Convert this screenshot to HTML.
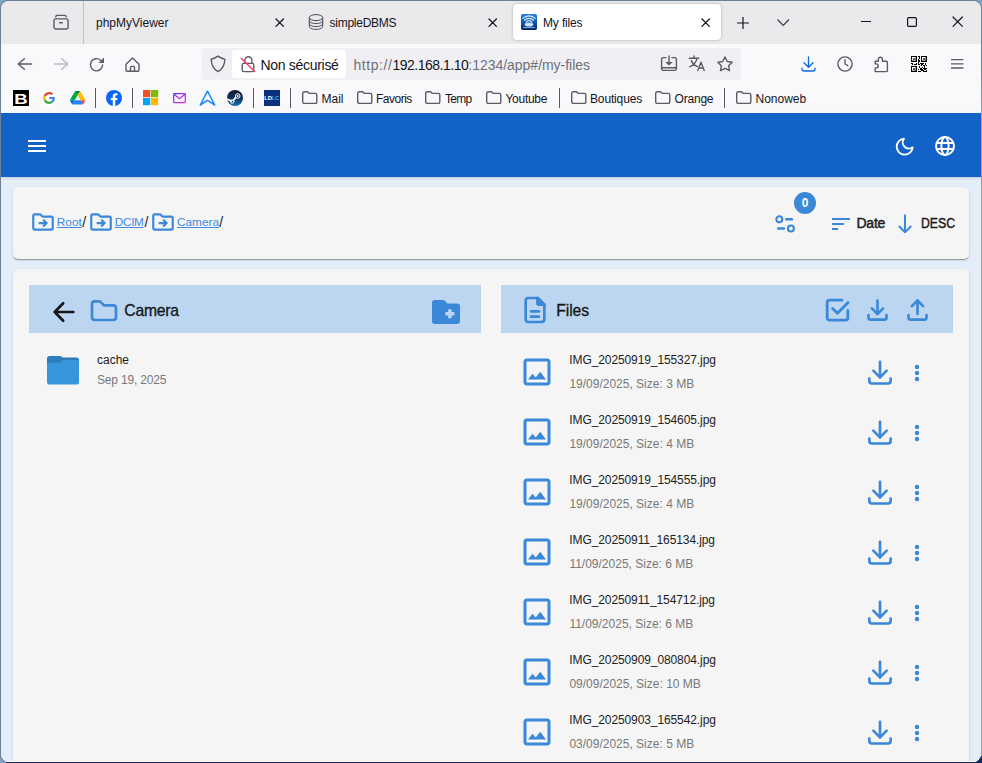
<!DOCTYPE html>
<html lang="fr">
<head>
<meta charset="utf-8">
<title>My files</title>
<style>
*{box-sizing:border-box;margin:0;padding:0}
html,body{width:982px;height:763px;overflow:hidden}
body{background:#80a5c5;font-family:"Liberation Sans",sans-serif;position:relative;color:#15141a}
.abs{position:absolute}
#win{position:absolute;left:1px;top:1px;width:979.6px;height:761px;border-radius:8px 8px 8px 8px;overflow:hidden;background:#f9f9fb}
#edgeR{position:absolute;left:976px;top:8px;width:6px;height:752px;background:linear-gradient(#6a8197 0,#6a8197 60px,#a0a0a0 110px,#a0a0a0 100%)}
#edgeB{position:absolute;left:6px;top:756px;width:976px;height:7px;background:#17275c}
/* ---------- browser chrome ---------- */
#tabbar{position:absolute;left:0;top:0;width:980px;height:43px;background:#eaeaed}
#tabbar .sep{position:absolute;left:82.2px;top:0;width:1px;height:43px;background:#c0c0c6}
.tabtxt{position:absolute;font-size:12px;line-height:16px;top:14px;white-space:nowrap;color:#15141a}
#acttab{position:absolute;left:512px;top:3px;width:208px;height:36px;background:#fff;border-radius:4px;box-shadow:0 0 3px rgba(0,0,0,.28)}
#navbar{position:absolute;left:0;top:43px;width:980px;height:69px;background:#f9f9fb}
#urlbar{position:absolute;left:201px;top:47px;width:539px;height:32px;background:#f0f0f4;border-radius:4px}
#nonsec{position:absolute;left:231px;top:49px;width:114px;height:28px;background:#fff;border-radius:4px}
.urltxt{position:absolute;top:56.3px;font-size:14px;line-height:16px;white-space:nowrap}
.bm{position:absolute;top:90px;font-size:12px;line-height:16px;white-space:nowrap;color:#15141a}
.bsep{position:absolute;top:87px;width:1px;height:20px;background:#5b5b66}
svg{position:absolute;overflow:visible}
/* ---------- app ---------- */
#page{position:absolute;left:0;top:112px;width:980px;height:649px;background:#e3eefa}
#appbar{position:absolute;width:980px;height:64px;background:#1262c8;box-shadow:0 1px 3px 0 rgba(0,0,0,.16)}
.card{position:absolute;background:#f5f5f5;border-radius:5px;box-shadow:0 2px 1px -1px rgba(0,0,0,.2),0 1px 1px 0 rgba(0,0,0,.14),0 1px 3px 0 rgba(0,0,0,.12)}
.hdr{position:absolute;top:16px;height:48px;width:452px;background:#bcd6f2}
.t{position:absolute;white-space:nowrap}
.nm{font-size:12px;line-height:16px;color:#1c1c1c;letter-spacing:-.1px}
.sb{font-size:12px;line-height:16px;color:#787878}
.ttl{font-size:15.7px;line-height:20px;color:#161616;-webkit-text-stroke:.32px #161616}
.lnk{font-size:11.8px;line-height:16px;color:#4189e6;text-decoration:underline;text-underline-offset:.6px}
.sl{font-size:14px;line-height:16px;color:#222}
.btn{font-size:14px;line-height:16px;color:#1b1b1b;-webkit-text-stroke:.45px #1b1b1b}
</style>
</head>
<body>
<div style="position:absolute;left:1px;top:1px;width:979.6px;height:761px;border-radius:8px;box-shadow:0 0 0 1.3px #6a8197"></div>
<div id="edgeR"></div>
<div id="edgeB"></div>
<div id="win">
  <!-- ================= TAB BAR ================= -->
  <div id="tabbar">
    <div class="sep"></div>
    <div id="acttab"></div>
    <div class="tabtxt" style="left:95px">phpMyViewer</div>
    <div class="tabtxt" style="left:328.5px;letter-spacing:-.25px">simpleDBMS</div>
    <div class="tabtxt" style="left:542px;letter-spacing:-.15px">My files</div>
  </div>
  <!-- ================= NAV BAR ================= -->
  <div id="navbar"></div>
  <div id="urlbar"></div>
  <div id="nonsec"></div>
  <div class="urltxt" style="left:259.5px;color:#15141a;letter-spacing:-.3px">Non sécurisé</div>
  <div class="urltxt" style="left:352.5px;color:#6f6f78"><span style="letter-spacing:.55px">http://</span><span style="color:#15141a;letter-spacing:-.48px">192.168.1.10</span><span style="letter-spacing:-.03px">:1234/app#/my-files</span></div>
  <!-- ================= BOOKMARKS ================= -->
  <div class="bm" style="left:320.5px">Mail</div>
  <div class="bm" style="left:375px;letter-spacing:-.5px">Favoris</div>
  <div class="bm" style="left:444px;letter-spacing:-.75px">Temp</div>
  <div class="bm" style="left:504.5px;letter-spacing:-.29px">Youtube</div>
  <div class="bm" style="left:589px;letter-spacing:-.15px">Boutiques</div>
  <div class="bm" style="left:673.5px;letter-spacing:-.2px">Orange</div>
  <div class="bm" style="left:754.5px">Nonoweb</div>
  <div class="bsep" style="left:94px"></div>
  <div class="bsep" style="left:131px"></div>
  <div class="bsep" style="left:252px"></div>
  <div class="bsep" style="left:289px"></div>
  <div class="bsep" style="left:558px"></div>
  <div class="bsep" style="left:723px"></div>
  <div style="position:absolute;left:-1px;top:-1px;width:982px;height:763px">
<svg style="left:53px;top:14px" width="16" height="16" viewBox="0 0 16 16" fill="none" stroke="#5b5b66" stroke-width="1.4" stroke-linecap="round" stroke-linejoin="round"><path d="M2.800 2.900v-.2a1.300 1.300 0 0 1 1.300-1.300h7.800a1.300 1.300 0 0 1 1.300 1.300v.2"/><rect x="0.950" y="4.850" width="14.150" height="10.150" rx="2"/><path d="M6.700 8.800h2.600"/></svg>
<svg style="left:275.90000000000003px;top:18.5px" width="7.4" height="7.4" viewBox="0 0 7.4 7.4" ><path d="M0 0L7.4 7.4M7.4 0L0 7.4" stroke="#15141a" stroke-width="1.3" stroke-linecap="round"/></svg>
<svg style="left:489.1px;top:18.5px" width="7.4" height="7.4" viewBox="0 0 7.4 7.4" ><path d="M0 0L7.4 7.4M7.4 0L0 7.4" stroke="#15141a" stroke-width="1.3" stroke-linecap="round"/></svg>
<svg style="left:701.5px;top:18.5px" width="7.4" height="7.4" viewBox="0 0 7.4 7.4" ><path d="M0 0L7.4 7.4M7.4 0L0 7.4" stroke="#15141a" stroke-width="1.3" stroke-linecap="round"/></svg>
<svg style="left:308px;top:14px" width="16" height="16" viewBox="0 0 16 16" fill="none" stroke="#45454d" stroke-width="1"><ellipse cx="8" cy="3.600" rx="6.700" ry="3"/><path d="M1.300 3.600v8.800c0 1.650 3 3 6.700 3s6.700-1.350 6.700-3V3.600"/><path d="M1.300 6.600c0 1.650 3 3 6.700 3s6.700-1.350 6.700-3M1.300 9.600c0 1.650 3 3 6.700 3s6.700-1.350 6.700-3"/></svg>
<svg style="left:521px;top:14px" width="16" height="16" viewBox="0 0 16 16" ><defs><linearGradient id="fg" x1="0" y1="0" x2="0" y2="1"><stop offset="0" stop-color="#2a7fdd"/><stop offset=".55" stop-color="#0d56b4"/><stop offset="1" stop-color="#04235f"/></linearGradient></defs><rect width="16" height="16" rx="1.800" fill="url(#fg)"/><g fill="none" stroke="#e8f3ff" stroke-width="1.150" stroke-linecap="round"><path d="M1.800 4.300a9 9 0 0 1 12.400 0"/><path d="M3.500 6.200a6.500 6.500 0 0 1 9 0"/><path d="M5.200 8a4 4 0 0 1 5.600 0"/></g><ellipse cx="8" cy="10.400" rx="4.300" ry="2" fill="#cfe4fb"/><rect x="2" y="13" width="12" height="1" fill="#9fc3ee" opacity=".8"/></svg>
<svg style="left:736.5px;top:16.5px" width="12" height="12" viewBox="0 0 12 12" ><path d="M6 0v12M0 6h12" stroke="#15141a" stroke-width="1.200"/></svg>
<svg style="left:777px;top:18.5px" width="12.5" height="7" viewBox="0 0 12.5 7" ><path d="M0.500 0.500l5.750 5.800 5.750-5.800" fill="none" stroke="#3a3a42" stroke-width="1.200"/></svg>
<svg style="left:861px;top:21px" width="10" height="1" viewBox="0 0 10 1" ><rect width="10" height="1" fill="#15141a"/></svg>
<svg style="left:907px;top:17px" width="10" height="10" viewBox="0 0 10 10" ><rect x=".6" y=".6" width="8.800" height="8.800" rx="1.200" fill="none" stroke="#15141a" stroke-width="1.200"/></svg>
<svg style="left:953.4px;top:17.3px" width="9.4" height="9.4" viewBox="0 0 9.4 9.4" ><path d="M0 0L9.4 9.4M9.4 0L0 9.4" stroke="#15141a" stroke-width="1.2" stroke-linecap="round"/></svg>
<svg style="left:17px;top:57px" width="16" height="14" viewBox="0 0 16 14" fill="none" stroke="#5b5b66" stroke-width="1.4" stroke-linecap="round" stroke-linejoin="round"><path d="M14.500 7H1.200M7.400 1.700L1.200 7l6.200 5.300"/></svg>
<svg style="left:53px;top:57px" width="16" height="14" viewBox="0 0 16 14" fill="none" stroke="#b9b9c0" stroke-width="1.400" stroke-linecap="round" stroke-linejoin="round"><path d="M1.500 7h13.300M8.600 1.700L14.800 7l-6.200 5.300"/></svg>
<svg style="left:89px;top:57px" width="16" height="15" viewBox="0 0 16 15" ><path d="M13.600 8a6.100 6.100 0 1 1-1.900-4.700" fill="none" stroke="#5b5b66" stroke-width="1.400" stroke-linecap="round"/><path d="M15 0.600v5.400H9.600z" fill="#5b5b66"/></svg>
<svg style="left:125px;top:57px" width="15" height="15" viewBox="0 0 15 15" fill="none" stroke="#5b5b66" stroke-width="1.4" stroke-linecap="round" stroke-linejoin="round"><path d="M1 7.200L7.500 0.900 14 7.200V13a1.200 1.200 0 0 1-1.200 1.200H2.200A1.200 1.200 0 0 1 1 13z"/><path d="M5.500 14v-3.600a1 1 0 0 1 1-1h2a1 1 0 0 1 1 1V14"/></svg>
<svg style="left:210px;top:55px" width="16" height="18" viewBox="0 0 16 18" fill="none" stroke="#5b5b66" stroke-width="1.4" stroke-linecap="round" stroke-linejoin="round"><path d="M8 1.200C5.800 2.700 3.600 3.700 1.200 4.300c0 5.400 2.400 9.800 6.800 12.300 4.400-2.500 6.800-6.900 6.800-12.300C12.400 3.700 10.200 2.700 8 1.200z"/></svg>
<svg style="left:240px;top:55px" width="16" height="18" viewBox="0 0 16 18" fill="none" stroke="#5b5b66" stroke-width="1.4" stroke-linecap="round" stroke-linejoin="round"><rect x="2.200" y="8.400" width="11.600" height="8.200" rx="1.600"/><path d="M4.900 8.200V5.300a3.500 3.500 0 0 1 7 0v2.900"/></svg>
<svg style="left:240px;top:55px" width="16" height="18" viewBox="0 0 16 18" ><path d="M1.200 3.200l13.400 13.200" stroke="#ff3b6b" stroke-width="1.400" stroke-linecap="round"/></svg>
<svg style="left:660px;top:55px" width="18" height="17" viewBox="0 0 18 17" ><path d="M6 2.600H3.200A1.600 1.600 0 0 0 1.600 4.200v9.600a1.600 1.600 0 0 0 1.600 1.600h11.600a1.600 1.600 0 0 0 1.600-1.600V4.200a1.600 1.600 0 0 0-1.600-1.600H12M1.600 12.700h14.800M9 1v7.500" fill="none" stroke="#5b5b66" stroke-width="1.400" stroke-linecap="round"/><path d="M5.200 7h7.600L9 10.600z" fill="#5b5b66"/></svg>
<svg style="left:688px;top:55px" width="18" height="17" viewBox="0 0 18 17" fill="none" stroke="#5b5b66" stroke-width="1.4" stroke-linecap="round" stroke-linejoin="round"><path d="M1.300 3.300h9.400M6 1v2.300M9 3.300C8.300 7 5.600 10 1.600 11.800M3.300 5.600c1 2.600 3.200 4.800 6 6"/><path d="M9.800 15.600l3.200-8.400 3.200 8.400M10.900 13h4.200"/></svg>
<svg style="left:717px;top:56px" width="16" height="16" viewBox="0 0 16 16" fill="none" stroke="#5b5b66" stroke-width="1.4" stroke-linecap="round" stroke-linejoin="round"><path d="M8 .9l2.200 4.600 5 .7-3.600 3.500.9 5L8 12.300l-4.500 2.400.9-5L.8 6.200l5-.7z"/></svg>
<svg style="left:801px;top:55.5px" width="15" height="16" viewBox="0 0 15 16" ><path d="M7.500 .8v10M3 6.700l4.500 4.500L12 6.700M1 12.200v1.400A1.400 1.400 0 0 0 2.400 15h10.200a1.400 1.400 0 0 0 1.400-1.400v-1.400" fill="none" stroke="#0a6ae6" stroke-width="1.350" stroke-linecap="round" stroke-linejoin="round"/></svg>
<svg style="left:836.7px;top:56px" width="16" height="16" viewBox="0 0 16 16" fill="none" stroke="#5b5b66" stroke-width="1.4" stroke-linecap="round" stroke-linejoin="round"><circle cx="8" cy="8" r="7.100"/><path d="M8 3.800V8l2.800 1.700"/></svg>
<svg style="left:874px;top:56px" width="15" height="16" viewBox="0 0 15 16" fill="none" stroke="#5b5b66" stroke-width="1.4" stroke-linecap="round" stroke-linejoin="round"><path d="M1.200 5.200h3.200V3.300a2 2 0 0 1 4 0v1.900h3.800a1.200 1.200 0 0 1 1.200 1.200v8a1.200 1.200 0 0 1-1.200 1.200H1.200v-3.700h1a2 2 0 0 0 0-4h-1z"/></svg>
<svg style="left:911px;top:56px" width="16" height="16" viewBox="0 0 16 16" ><rect x="0" y="0" width="6" height="6" fill="#000"/><rect x="1" y="1" width="3.600" height="3.600" fill="#fff"/><rect x="2.2" y="2.2" width="1.600" height="1.600" fill="#000"/><rect x="10" y="0" width="6" height="6" fill="#000"/><rect x="11" y="1" width="3.600" height="3.600" fill="#fff"/><rect x="12.2" y="2.2" width="1.600" height="1.600" fill="#000"/><rect x="0" y="10" width="6" height="6" fill="#000"/><rect x="1" y="11" width="3.600" height="3.600" fill="#fff"/><rect x="2.2" y="12.2" width="1.600" height="1.600" fill="#000"/><rect x="7" y="0" width="1" height="1" fill="#000"/><rect x="8" y="0" width="1" height="1" fill="#000"/><rect x="8" y="1" width="1" height="1" fill="#000"/><rect x="8" y="2" width="1" height="1" fill="#000"/><rect x="7" y="3" width="1" height="1" fill="#000"/><rect x="7" y="4" width="1" height="1" fill="#000"/><rect x="8" y="4" width="1" height="1" fill="#000"/><rect x="7" y="5" width="1" height="1" fill="#000"/><rect x="8" y="5" width="1" height="1" fill="#000"/><rect x="7" y="6" width="1" height="1" fill="#000"/><rect x="0" y="7" width="1" height="1" fill="#000"/><rect x="1" y="7" width="1" height="1" fill="#000"/><rect x="5" y="7" width="1" height="1" fill="#000"/><rect x="7" y="7" width="1" height="1" fill="#000"/><rect x="9" y="7" width="1" height="1" fill="#000"/><rect x="10" y="7" width="1" height="1" fill="#000"/><rect x="11" y="7" width="1" height="1" fill="#000"/><rect x="12" y="7" width="1" height="1" fill="#000"/><rect x="14" y="7" width="1" height="1" fill="#000"/><rect x="1" y="8" width="1" height="1" fill="#000"/><rect x="3" y="8" width="1" height="1" fill="#000"/><rect x="4" y="8" width="1" height="1" fill="#000"/><rect x="5" y="8" width="1" height="1" fill="#000"/><rect x="7" y="8" width="1" height="1" fill="#000"/><rect x="8" y="8" width="1" height="1" fill="#000"/><rect x="10" y="8" width="1" height="1" fill="#000"/><rect x="11" y="8" width="1" height="1" fill="#000"/><rect x="14" y="8" width="1" height="1" fill="#000"/><rect x="10" y="9" width="1" height="1" fill="#000"/><rect x="12" y="9" width="1" height="1" fill="#000"/><rect x="13" y="9" width="1" height="1" fill="#000"/><rect x="15" y="9" width="1" height="1" fill="#000"/><rect x="8" y="10" width="1" height="1" fill="#000"/><rect x="13" y="10" width="1" height="1" fill="#000"/><rect x="8" y="11" width="1" height="1" fill="#000"/><rect x="11" y="11" width="1" height="1" fill="#000"/><rect x="13" y="11" width="1" height="1" fill="#000"/><rect x="9" y="12" width="1" height="1" fill="#000"/><rect x="10" y="12" width="1" height="1" fill="#000"/><rect x="12" y="12" width="1" height="1" fill="#000"/><rect x="13" y="12" width="1" height="1" fill="#000"/><rect x="14" y="12" width="1" height="1" fill="#000"/><rect x="15" y="12" width="1" height="1" fill="#000"/><rect x="7" y="13" width="1" height="1" fill="#000"/><rect x="9" y="13" width="1" height="1" fill="#000"/><rect x="10" y="13" width="1" height="1" fill="#000"/><rect x="11" y="13" width="1" height="1" fill="#000"/><rect x="13" y="13" width="1" height="1" fill="#000"/><rect x="14" y="13" width="1" height="1" fill="#000"/><rect x="10" y="14" width="1" height="1" fill="#000"/><rect x="11" y="14" width="1" height="1" fill="#000"/><rect x="12" y="14" width="1" height="1" fill="#000"/><rect x="15" y="14" width="1" height="1" fill="#000"/><rect x="7" y="15" width="1" height="1" fill="#000"/><rect x="8" y="15" width="1" height="1" fill="#000"/><rect x="9" y="15" width="1" height="1" fill="#000"/><rect x="12" y="15" width="1" height="1" fill="#000"/><rect x="13" y="15" width="1" height="1" fill="#000"/><rect x="14" y="15" width="1" height="1" fill="#000"/><rect x="15" y="15" width="1" height="1" fill="#000"/></svg>
<svg style="left:951px;top:59px" width="12.5" height="10" viewBox="0 0 12.5 10" ><path d="M0 .6h12.500M0 4.800h12.500M0 9h12.500" stroke="#5b5b66" stroke-width="1.350"/></svg>
<svg style="left:13px;top:90px" width="16" height="16" viewBox="0 0 16 16" ><rect width="16" height="16" fill="#000"/><text x="6.650" y="13.700" transform="scale(1.2,1)" text-anchor="middle" font-family="Liberation Sans,sans-serif" font-weight="bold" font-size="15.500" fill="#fff">B</text></svg>
<svg style="left:41px;top:90px" width="16" height="16" viewBox="0 0 16 16" ><circle cx="8" cy="8" r="8" fill="#fff"/><path d="M13.900 8.150c0-.45-.04-.78-.12-1.130H8.120v2.080h3.320c-.07.520-.43 1.300-1.230 1.820l1.900 1.460c1.130-1.050 1.790-2.580 1.790-4.230z" fill="#4285f4"/><path d="M8.120 14c1.630 0 3-.53 3.990-1.460l-1.900-1.470c-.51.350-1.190.6-2.090.6-1.590 0-2.940-1.050-3.420-2.500l-1.960 1.520C3.730 12.650 5.760 14 8.120 14z" fill="#34a853"/><path d="M4.700 9.170A3.700 3.700 0 0 1 4.500 8c0-.41.070-.8.190-1.170L2.730 5.310A6 6 0 0 0 2.100 8c0 .97.230 1.880.64 2.690z" fill="#fbbc05"/><path d="M8.120 4.320c1.130 0 1.900.49 2.330.9l1.700-1.660C11.110 2.590 9.750 2 8.120 2 5.760 2 3.730 3.350 2.740 5.310L4.690 6.830c.49-1.450 1.840-2.510 3.430-2.510z" fill="#ea4335"/></svg>
<svg style="left:69.5px;top:90.8px" width="15.2" height="13.6" viewBox="0 0 15.2 13.6" ><path d="M1.150 11.650l.67 1.160c.14.240.34.430.57.570l2.400-4.150H0c0 .27.070.54.210.78z" fill="#0066da"/><path d="M7.600 4.350L5.200.2c-.23.140-.43.330-.57.570L.21 8.450c-.14.240-.21.510-.21.780h4.790z" fill="#00ac47"/><path d="M12.810 13.380c.23-.14.430-.33.570-.57l.28-.48 1.330-2.310c.14-.24.210-.51.210-.78h-4.790l1.020 2z" fill="#ea4335"/><path d="M7.600 4.350L10 .2C9.770.07 9.500 0 9.220 0H5.980c-.28 0-.55.080-.78.200z" fill="#00832d"/><path d="M10.410 9.230H4.790l-2.400 4.150c.23.140.5.210.78.210h8.860c.28 0 .55-.08.780-.21z" fill="#2684fc"/><path d="M12.780 4.600L10.570.77C10.430.53 10.230.34 10 .2L7.600 4.350l2.810 4.880h4.780c0-.27-.07-.54-.21-.78z" fill="#ffba00"/></svg>
<svg style="left:106px;top:90px" width="16" height="16" viewBox="0 0 16 16" ><circle cx="8" cy="8" r="8" fill="#0866ff"/><path d="M11.100 10.300l.36-2.300H9.250V6.500c0-.63.310-1.250 1.300-1.250h1V3.290s-.91-.16-1.780-.16c-1.810 0-3 1.100-3 3.100V8H4.750v2.300h2.020v5.600a8 8 0 0 0 2.480 0v-5.600z" fill="#fff"/></svg>
<svg style="left:142.8px;top:90px" width="15.2" height="15.2" viewBox="0 0 15.2 15.2" ><rect width="7.200" height="7.200" fill="#f25022"/><rect x="8" width="7.200" height="7.200" fill="#7fba00"/><rect y="8" width="7.200" height="7.200" fill="#00a4ef"/><rect x="8" y="8" width="7.200" height="7.200" fill="#ffb900"/></svg>
<svg style="left:172.5px;top:92.8px" width="13" height="10.4" viewBox="0 0 13 10.4" ><defs><linearGradient id="mg" x1="0" y1="0" x2="1" y2="1"><stop offset="0" stop-color="#6238e6"/><stop offset="1" stop-color="#f01cf0"/></linearGradient></defs><rect x=".7" y=".7" width="11.600" height="9" rx=".8" fill="none" stroke="url(#mg)" stroke-width="1.250"/><path d="M1 1.200l5.500 4.500L12 1.200" fill="none" stroke="url(#mg)" stroke-width="1.250"/></svg>
<svg style="left:198.5px;top:90px" width="17" height="16" viewBox="0 0 17 16" ><path d="M8.500 1.200L1.300 15l7.200-4.600L15.700 15z" fill="none" stroke="#1a8cff" stroke-width="1.550" stroke-linejoin="round"/></svg>
<svg style="left:227px;top:90px" width="16" height="16" viewBox="0 0 16 16" ><defs><linearGradient id="sg" x1="0" y1="0" x2="0" y2="1"><stop offset="0" stop-color="#111d2e"/><stop offset=".45" stop-color="#0f2c55"/><stop offset="1" stop-color="#1a74ad"/></linearGradient></defs><circle cx="8" cy="8" r="8" fill="url(#sg)"/><circle cx="10.700" cy="6" r="2.300" fill="none" stroke="#fff" stroke-width="1"/><circle cx="10.700" cy="6" r=".9" fill="#fff"/><path d="M0.300 9.300l4 1.700M8.600 7.600L6.400 10.600" stroke="#fff" stroke-width="1.700" stroke-linecap="round"/><circle cx="5.200" cy="11.600" r="1.700" fill="none" stroke="#fff" stroke-width="1"/></svg>
<svg style="left:264px;top:90px" width="16" height="16" viewBox="0 0 16 16" ><rect width="16" height="16" fill="#0c2f80"/><text x="0.300" y="10" font-family="Liberation Sans,sans-serif" font-weight="bold" font-size="5.800" fill="#fff" letter-spacing="-.2">LD<tspan fill="#4aa3e8">LC</tspan></text></svg>
<svg style="left:301.6px;top:91px" width="15.5" height="13" viewBox="0 0 15.5 13" fill="none" stroke="#5b5b66" stroke-width="1.4" stroke-linecap="round" stroke-linejoin="round"><path d="M.7 2.300A1.600 1.600 0 0 1 2.300 .7h3.300l1.700 1.700h6A1.500 1.500 0 0 1 14.800 3.900v7a1.500 1.500 0 0 1-1.500 1.500H2.300A1.600 1.600 0 0 1 .7 10.800z"/></svg>
<svg style="left:356.8px;top:91px" width="15.5" height="13" viewBox="0 0 15.5 13" fill="none" stroke="#5b5b66" stroke-width="1.4" stroke-linecap="round" stroke-linejoin="round"><path d="M.7 2.300A1.600 1.600 0 0 1 2.300 .7h3.300l1.700 1.700h6A1.500 1.500 0 0 1 14.800 3.900v7a1.500 1.500 0 0 1-1.500 1.500H2.300A1.600 1.600 0 0 1 .7 10.800z"/></svg>
<svg style="left:425px;top:91px" width="15.5" height="13" viewBox="0 0 15.5 13" fill="none" stroke="#5b5b66" stroke-width="1.4" stroke-linecap="round" stroke-linejoin="round"><path d="M.7 2.300A1.600 1.600 0 0 1 2.300 .7h3.300l1.700 1.700h6A1.500 1.500 0 0 1 14.800 3.900v7a1.500 1.500 0 0 1-1.500 1.500H2.300A1.600 1.600 0 0 1 .7 10.800z"/></svg>
<svg style="left:485.7px;top:91px" width="15.5" height="13" viewBox="0 0 15.5 13" fill="none" stroke="#5b5b66" stroke-width="1.4" stroke-linecap="round" stroke-linejoin="round"><path d="M.7 2.300A1.600 1.600 0 0 1 2.300 .7h3.300l1.700 1.700h6A1.500 1.500 0 0 1 14.800 3.900v7a1.500 1.500 0 0 1-1.500 1.500H2.300A1.600 1.600 0 0 1 .7 10.800z"/></svg>
<svg style="left:570.6px;top:91px" width="15.5" height="13" viewBox="0 0 15.5 13" fill="none" stroke="#5b5b66" stroke-width="1.4" stroke-linecap="round" stroke-linejoin="round"><path d="M.7 2.300A1.600 1.600 0 0 1 2.300 .7h3.300l1.700 1.700h6A1.500 1.500 0 0 1 14.800 3.900v7a1.500 1.500 0 0 1-1.500 1.500H2.300A1.600 1.600 0 0 1 .7 10.800z"/></svg>
<svg style="left:654.7px;top:91px" width="15.5" height="13" viewBox="0 0 15.5 13" fill="none" stroke="#5b5b66" stroke-width="1.4" stroke-linecap="round" stroke-linejoin="round"><path d="M.7 2.300A1.600 1.600 0 0 1 2.300 .7h3.300l1.700 1.700h6A1.500 1.500 0 0 1 14.800 3.900v7a1.500 1.500 0 0 1-1.500 1.500H2.300A1.600 1.600 0 0 1 .7 10.800z"/></svg>
<svg style="left:735.6px;top:91px" width="15.5" height="13" viewBox="0 0 15.5 13" fill="none" stroke="#5b5b66" stroke-width="1.4" stroke-linecap="round" stroke-linejoin="round"><path d="M.7 2.300A1.600 1.600 0 0 1 2.300 .7h3.300l1.700 1.700h6A1.500 1.500 0 0 1 14.800 3.900v7a1.500 1.500 0 0 1-1.500 1.500H2.300A1.600 1.600 0 0 1 .7 10.800z"/></svg>
</div>
  <!-- ================= APP ================= -->
  <div id="page">
    <div id="s" style="position:absolute;left:-1px;top:-113px;width:982px;height:763px">
<div class="card" style="left:13px;top:187px;width:956px;height:72px"></div>
<div class="card" style="left:13px;top:269px;width:956px;height:520px"></div>
<div id="appbar" style="left:1px;top:113px"></div>
<svg style="left:25px;top:134px" width="24" height="24" viewBox="0 0 24 24"><path fill="#fff" d="M3 6h18v2H3zM3 11h18v2H3zM3 16h18v2H3z"/></svg>
<svg style="left:894.1px;top:136.3px" width="21.33" height="21.33" viewBox="0 0 24 24" fill="none" stroke="#fff" stroke-width="2.1" stroke-linecap="round" stroke-linejoin="round"><path d="M21 12.790A9 9 0 1 1 11.210 3 7 7 0 0 0 21 12.790z"/></svg>
<svg style="left:933.3px;top:134px" width="24" height="24" viewBox="0 0 24 24" fill="none" stroke="#fff" stroke-width="2"><circle cx="12" cy="12" r="9"/><ellipse cx="12" cy="12" rx="3.6" ry="9"/><path d="M3.6 9h16.8M3.6 15h16.8"/></svg>
<svg style="left:30.1px;top:208.7px" width="26" height="26" viewBox="0 0 24 24" fill="none" stroke="#3b88d8" stroke-width="2" stroke-linejoin="round" stroke-linecap="round"><path d="M3 6.2a1.2 1.2 0 0 1 1.2-1.2h5.3l2 2h8.3a1.2 1.2 0 0 1 1.2 1.2v9.6a1.2 1.2 0 0 1-1.2 1.2H4.2A1.2 1.2 0 0 1 3 17.8z"/><path d="M8 13h7M12.2 9.900l3.100 3.100-3.100 3.100" stroke-linecap="butt" stroke-linejoin="miter"/></svg>
<svg style="left:88.3px;top:208.7px" width="26" height="26" viewBox="0 0 24 24" fill="none" stroke="#3b88d8" stroke-width="2" stroke-linejoin="round" stroke-linecap="round"><path d="M3 6.2a1.2 1.2 0 0 1 1.2-1.2h5.3l2 2h8.3a1.2 1.2 0 0 1 1.2 1.2v9.6a1.2 1.2 0 0 1-1.2 1.2H4.2A1.2 1.2 0 0 1 3 17.8z"/><path d="M8 13h7M12.2 9.900l3.100 3.100-3.100 3.100" stroke-linecap="butt" stroke-linejoin="miter"/></svg>
<svg style="left:150.1px;top:208.7px" width="26" height="26" viewBox="0 0 24 24" fill="none" stroke="#3b88d8" stroke-width="2" stroke-linejoin="round" stroke-linecap="round"><path d="M3 6.2a1.2 1.2 0 0 1 1.2-1.2h5.3l2 2h8.3a1.2 1.2 0 0 1 1.2 1.2v9.6a1.2 1.2 0 0 1-1.2 1.2H4.2A1.2 1.2 0 0 1 3 17.8z"/><path d="M8 13h7M12.2 9.900l3.100 3.100-3.100 3.100" stroke-linecap="butt" stroke-linejoin="miter"/></svg>
<div class="t lnk" style="left:56.8px;top:213.5px">Root</div><div class="t sl" style="left:82.200px;top:214.300px">/</div>
<div class="t lnk" style="left:114.8px;top:213.5px;letter-spacing:-.35px">DCIM</div><div class="t sl" style="left:144.400px;top:214.300px">/</div>
<div class="t lnk" style="left:177px;top:213.5px">Camera</div><div class="t sl" style="left:219.200px;top:214.300px">/</div>
<svg style="left:773px;top:212px" width="24" height="24" viewBox="0 0 24 24" fill="none" stroke="#3b88d8" stroke-width="2.1" stroke-linecap="round"><circle cx="6.3" cy="7.3" r="3"/><path d="M13.400 7.300h5.400" stroke-width="2.600"/><path d="M5.200 16.500h5.600" stroke-width="2.600"/><circle cx="17.900" cy="16.500" r="3"/></svg>
<div class="t" style="left:794px;top:192px;width:22px;height:22px;border-radius:11px;background:#3b88d8;color:#fff;font-size:12px;font-weight:bold;line-height:23px;text-align:center">0</div>
<svg style="left:829px;top:212px" width="24" height="24" viewBox="0 0 24 24"><path fill="#3b88d8" d="M3 6h18v2H3zM3 11h12v2H3zM3 16h6v2H3z"/></svg>
<div class="t btn" style="left:856.500px;top:215px;letter-spacing:-.25px">Date</div>
<svg style="left:893px;top:212px" width="24" height="24" viewBox="0 0 24 24" fill="none" stroke="#3b88d8" stroke-width="1.95" stroke-linecap="round" stroke-linejoin="round"><path d="M12 3.300v16.800M6.300 14.500l5.700 5.700 5.700-5.700"/></svg>
<div class="t btn" style="left:920.500px;top:215px;transform:scaleX(.875);transform-origin:0 0">DESC</div>
<div class="hdr" style="left:29px;top:285px"></div>
<div class="hdr" style="left:501px;top:285px"></div>
<svg style="left:47.7px;top:296px" width="32" height="32" viewBox="0 0 24 24" fill="none" stroke="#161616" stroke-width="2" stroke-linecap="round" stroke-linejoin="round"><path d="M5 12h14M5 12l6.400 6.600M5 12l6.400-6.600"/></svg>
<svg style="left:87.800px;top:296px" width="32" height="32" viewBox="0 0 24 24" fill="none" stroke="#3b88d8" stroke-width="2" stroke-linecap="round" stroke-linejoin="round"><path d="M5 4h4l3 3h7a2 2 0 0 1 2 2v7a2 2 0 0 1 -2 2h-14a2 2 0 0 1 -2 -2v-10a2 2 0 0 1 2 -2"/></svg>
<div class="t ttl" style="left:124.300px;top:300.900px;letter-spacing:-.2px">Camera</div>
<svg style="left:432px;top:300px" width="28" height="24" viewBox="0 0 28 24"><path fill="#3b88d8" d="M3 0h8.2a2 2 0 0 1 1.4.6l2.8 2.9h9.6a3 3 0 0 1 3 3v14.5a3 3 0 0 1-3 3H3a3 3 0 0 1-3-3V3a3 3 0 0 1 3-3z"/><path fill="#bcd6f2" d="M16.2 9.2h3.4v2.8h2.8v3.4h-2.8v2.8h-3.4v-2.8h-2.8v-3.4h2.8z"/></svg>
<svg style="left:519.300px;top:294.300px" width="32" height="32" viewBox="0 0 24 24" fill="none" stroke="#3b88d8" stroke-width="2" stroke-linecap="round" stroke-linejoin="round"><path d="M14 3v4a1 1 0 0 0 1 1h4" fill="#3b88d8"/><path d="M14 3l5 5h-4a1 1 0 0 1-1-1z" fill="#3b88d8"/><path d="M17 21h-10a2 2 0 0 1 -2 -2v-14a2 2 0 0 1 2 -2h7l5 5v11a2 2 0 0 1 -2 2z"/><path d="M9 13h6M9 17h6"/></svg>
<div class="t ttl" style="left:556.300px;top:300.900px;letter-spacing:-.1px">Files</div>
<svg style="left:822.300px;top:294.600px" width="31" height="31" viewBox="0 0 24 24" fill="none" stroke="#3b88d8" stroke-width="2.15" stroke-linecap="round" stroke-linejoin="round"><path d="M8.200 10.400l3.800 3.800l8.200 -8.400"/><path d="M20 12v5.800a1.600 1.600 0 0 1 -1.600 1.600h-12.800a1.600 1.600 0 0 1 -1.600 -1.600v-12.200a1.600 1.600 0 0 1 1.600 -1.600h9.800"/></svg>
<svg style="left:863.900px;top:296.300px" width="27" height="27" viewBox="0 0 24 24" fill="none" stroke="#3b88d8" stroke-width="2.35" stroke-linecap="round" stroke-linejoin="round"><path d="M4 17v2a2 2 0 0 0 2 2h12a2 2 0 0 0 2 -2v-2"/><path d="M7 11l5 5l5 -5"/><path d="M12 4v12"/></svg>
<svg style="left:903.950px;top:296.300px" width="27" height="27" viewBox="0 0 24 24" fill="none" stroke="#3b88d8" stroke-width="2.35" stroke-linecap="round" stroke-linejoin="round"><path d="M4 17v2a2 2 0 0 0 2 2h12a2 2 0 0 0 2 -2v-2"/><path d="M7 9l5 -5l5 5"/><path d="M12 4v12"/></svg>
<svg style="left:47px;top:356.400px" width="32" height="28.600" viewBox="0 0 32 28" preserveAspectRatio="none"><path fill="#2c7dbe" d="M2.500 0h10.800a2.200 2.200 0 0 1 2.100 1.500H29.500a2.500 2.500 0 0 1 2.500 2.500V10H0V2.500A2.500 2.500 0 0 1 2.500 0z"/><path fill="#3795dc" d="M0 6.600h13.400l2.400-2.700H30.500a1.500 1.500 0 0 1 1.500 1.500v20.100a2.500 2.500 0 0 1-2.500 2.500h-27a2.500 2.500 0 0 1-2.500-2.500z"/></svg>
<div class="t nm" style="left:97px;top:351.800px;letter-spacing:0">cache</div>
<div class="t sb" style="left:97px;top:371.700px;letter-spacing:-.18px">Sep 19, 2025</div>
<svg style="left:518.500px;top:353.5px" width="36" height="36" viewBox="0 0 24 24"><path fill="#3b88d8" d="M19 5v14H5V5h14m0-2H5c-1.100 0-2 .9-2 2v14c0 1.100.9 2 2 2h14c1.100 0 2-.9 2-2V5c0-1.100-.9-2-2-2zm-4.860 8.860l-3 3.870L9 13.140 6 17h12l-3.860-5.140z"/></svg>
<div class="t nm" style="left:569.300px;top:351.8px">IMG_20250919_155327.jpg</div>
<div class="t sb" style="left:569.400px;top:375.8px">19/09/2025, Size: 3 MB</div>
<svg style="left:863.5px;top:356px" width="32" height="32" viewBox="0 0 24 24" fill="none" stroke="#3b88d8" stroke-width="2" stroke-linecap="round" stroke-linejoin="round"><path d="M4 17v1.600a2 2 0 0 0 2 2h12a2 2 0 0 0 2 -2v-1.600"/><path d="M7 11l5 5l5 -5"/><path d="M12 4.300v11.700"/></svg>
<svg style="left:905.400px;top:361px" width="24" height="24" viewBox="0 0 24 24" fill="#3b88d8"><circle cx="12" cy="6" r="2.200"/><circle cx="12" cy="12" r="2.200"/><circle cx="12" cy="18" r="2.200"/></svg>
<svg style="left:518.500px;top:413.5px" width="36" height="36" viewBox="0 0 24 24"><path fill="#3b88d8" d="M19 5v14H5V5h14m0-2H5c-1.100 0-2 .9-2 2v14c0 1.100.9 2 2 2h14c1.100 0 2-.9 2-2V5c0-1.100-.9-2-2-2zm-4.860 8.860l-3 3.870L9 13.140 6 17h12l-3.860-5.140z"/></svg>
<div class="t nm" style="left:569.300px;top:411.8px">IMG_20250919_154605.jpg</div>
<div class="t sb" style="left:569.400px;top:435.8px">19/09/2025, Size: 4 MB</div>
<svg style="left:863.5px;top:416px" width="32" height="32" viewBox="0 0 24 24" fill="none" stroke="#3b88d8" stroke-width="2" stroke-linecap="round" stroke-linejoin="round"><path d="M4 17v1.600a2 2 0 0 0 2 2h12a2 2 0 0 0 2 -2v-1.600"/><path d="M7 11l5 5l5 -5"/><path d="M12 4.300v11.700"/></svg>
<svg style="left:905.400px;top:421px" width="24" height="24" viewBox="0 0 24 24" fill="#3b88d8"><circle cx="12" cy="6" r="2.200"/><circle cx="12" cy="12" r="2.200"/><circle cx="12" cy="18" r="2.200"/></svg>
<svg style="left:518.500px;top:473.5px" width="36" height="36" viewBox="0 0 24 24"><path fill="#3b88d8" d="M19 5v14H5V5h14m0-2H5c-1.100 0-2 .9-2 2v14c0 1.100.9 2 2 2h14c1.100 0 2-.9 2-2V5c0-1.100-.9-2-2-2zm-4.860 8.860l-3 3.870L9 13.140 6 17h12l-3.860-5.140z"/></svg>
<div class="t nm" style="left:569.300px;top:471.8px">IMG_20250919_154555.jpg</div>
<div class="t sb" style="left:569.400px;top:495.8px">19/09/2025, Size: 4 MB</div>
<svg style="left:863.5px;top:476px" width="32" height="32" viewBox="0 0 24 24" fill="none" stroke="#3b88d8" stroke-width="2" stroke-linecap="round" stroke-linejoin="round"><path d="M4 17v1.600a2 2 0 0 0 2 2h12a2 2 0 0 0 2 -2v-1.600"/><path d="M7 11l5 5l5 -5"/><path d="M12 4.300v11.700"/></svg>
<svg style="left:905.400px;top:481px" width="24" height="24" viewBox="0 0 24 24" fill="#3b88d8"><circle cx="12" cy="6" r="2.200"/><circle cx="12" cy="12" r="2.200"/><circle cx="12" cy="18" r="2.200"/></svg>
<svg style="left:518.500px;top:533.5px" width="36" height="36" viewBox="0 0 24 24"><path fill="#3b88d8" d="M19 5v14H5V5h14m0-2H5c-1.100 0-2 .9-2 2v14c0 1.100.9 2 2 2h14c1.100 0 2-.9 2-2V5c0-1.100-.9-2-2-2zm-4.860 8.860l-3 3.870L9 13.140 6 17h12l-3.860-5.140z"/></svg>
<div class="t nm" style="left:569.300px;top:531.8px">IMG_20250911_165134.jpg</div>
<div class="t sb" style="left:569.400px;top:555.8px">11/09/2025, Size: 6 MB</div>
<svg style="left:863.5px;top:536px" width="32" height="32" viewBox="0 0 24 24" fill="none" stroke="#3b88d8" stroke-width="2" stroke-linecap="round" stroke-linejoin="round"><path d="M4 17v1.600a2 2 0 0 0 2 2h12a2 2 0 0 0 2 -2v-1.600"/><path d="M7 11l5 5l5 -5"/><path d="M12 4.300v11.700"/></svg>
<svg style="left:905.400px;top:541px" width="24" height="24" viewBox="0 0 24 24" fill="#3b88d8"><circle cx="12" cy="6" r="2.200"/><circle cx="12" cy="12" r="2.200"/><circle cx="12" cy="18" r="2.200"/></svg>
<svg style="left:518.500px;top:593.5px" width="36" height="36" viewBox="0 0 24 24"><path fill="#3b88d8" d="M19 5v14H5V5h14m0-2H5c-1.100 0-2 .9-2 2v14c0 1.100.9 2 2 2h14c1.100 0 2-.9 2-2V5c0-1.100-.9-2-2-2zm-4.860 8.860l-3 3.870L9 13.140 6 17h12l-3.860-5.140z"/></svg>
<div class="t nm" style="left:569.300px;top:591.8px">IMG_20250911_154712.jpg</div>
<div class="t sb" style="left:569.400px;top:615.8px">11/09/2025, Size: 6 MB</div>
<svg style="left:863.5px;top:596px" width="32" height="32" viewBox="0 0 24 24" fill="none" stroke="#3b88d8" stroke-width="2" stroke-linecap="round" stroke-linejoin="round"><path d="M4 17v1.600a2 2 0 0 0 2 2h12a2 2 0 0 0 2 -2v-1.600"/><path d="M7 11l5 5l5 -5"/><path d="M12 4.300v11.700"/></svg>
<svg style="left:905.400px;top:601px" width="24" height="24" viewBox="0 0 24 24" fill="#3b88d8"><circle cx="12" cy="6" r="2.200"/><circle cx="12" cy="12" r="2.200"/><circle cx="12" cy="18" r="2.200"/></svg>
<svg style="left:518.500px;top:653.5px" width="36" height="36" viewBox="0 0 24 24"><path fill="#3b88d8" d="M19 5v14H5V5h14m0-2H5c-1.100 0-2 .9-2 2v14c0 1.100.9 2 2 2h14c1.100 0 2-.9 2-2V5c0-1.100-.9-2-2-2zm-4.860 8.860l-3 3.870L9 13.140 6 17h12l-3.860-5.140z"/></svg>
<div class="t nm" style="left:569.300px;top:651.8px">IMG_20250909_080804.jpg</div>
<div class="t sb" style="left:569.400px;top:675.8px">09/09/2025, Size: 10 MB</div>
<svg style="left:863.5px;top:656px" width="32" height="32" viewBox="0 0 24 24" fill="none" stroke="#3b88d8" stroke-width="2" stroke-linecap="round" stroke-linejoin="round"><path d="M4 17v1.600a2 2 0 0 0 2 2h12a2 2 0 0 0 2 -2v-1.600"/><path d="M7 11l5 5l5 -5"/><path d="M12 4.300v11.700"/></svg>
<svg style="left:905.400px;top:661px" width="24" height="24" viewBox="0 0 24 24" fill="#3b88d8"><circle cx="12" cy="6" r="2.200"/><circle cx="12" cy="12" r="2.200"/><circle cx="12" cy="18" r="2.200"/></svg>
<svg style="left:518.500px;top:713.5px" width="36" height="36" viewBox="0 0 24 24"><path fill="#3b88d8" d="M19 5v14H5V5h14m0-2H5c-1.100 0-2 .9-2 2v14c0 1.100.9 2 2 2h14c1.100 0 2-.9 2-2V5c0-1.100-.9-2-2-2zm-4.860 8.860l-3 3.870L9 13.140 6 17h12l-3.860-5.140z"/></svg>
<div class="t nm" style="left:569.300px;top:711.8px">IMG_20250903_165542.jpg</div>
<div class="t sb" style="left:569.400px;top:735.8px">03/09/2025, Size: 5 MB</div>
<svg style="left:863.5px;top:716px" width="32" height="32" viewBox="0 0 24 24" fill="none" stroke="#3b88d8" stroke-width="2" stroke-linecap="round" stroke-linejoin="round"><path d="M4 17v1.600a2 2 0 0 0 2 2h12a2 2 0 0 0 2 -2v-1.600"/><path d="M7 11l5 5l5 -5"/><path d="M12 4.300v11.700"/></svg>
<svg style="left:905.400px;top:721px" width="24" height="24" viewBox="0 0 24 24" fill="#3b88d8"><circle cx="12" cy="6" r="2.200"/><circle cx="12" cy="12" r="2.200"/><circle cx="12" cy="18" r="2.200"/></svg>
</div>
  </div>
  <div class="abs" style="left:0;top:760px;width:980px;height:1px;background:#fbfcfe"></div>
</div>
</body>
</html>
